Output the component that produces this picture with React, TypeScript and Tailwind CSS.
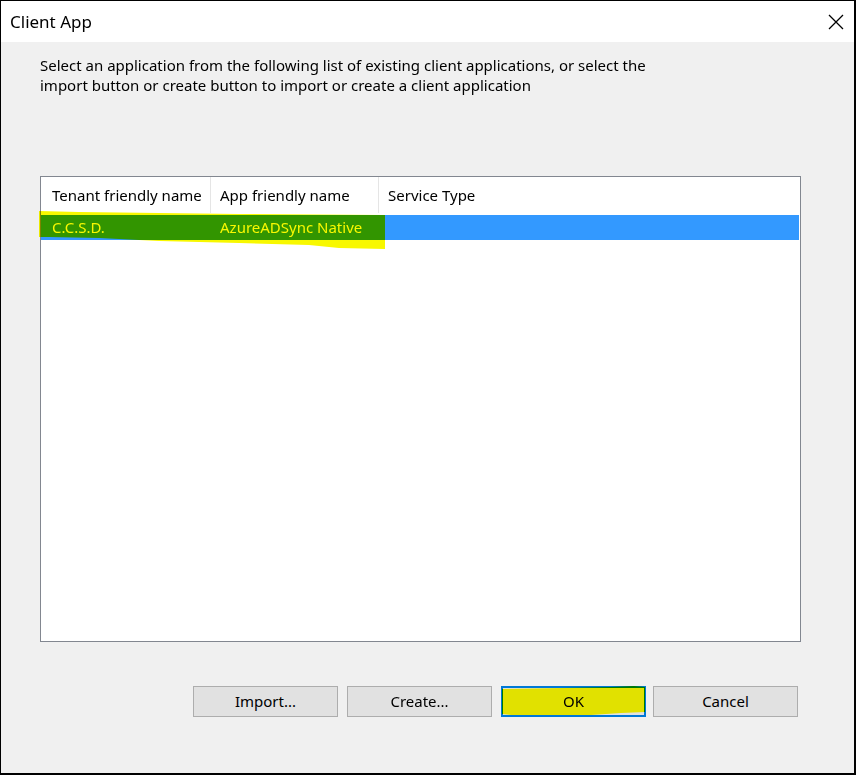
import React from "react";

const font = { fontFamily: '"Noto Sans", "Open Sans", sans-serif' };

function CloseIcon() {
  return (
    <svg width="16" height="16" viewBox="0 0 16 16" className="block">
      <path d="M1 1 L15 15 M15 1 L1 15" stroke="#000" strokeWidth="1.3" fill="none" />
    </svg>
  );
}

function DialogButton({ label, primary }: { label: string; primary?: boolean }) {
  return (
    <div
      className={`relative flex h-[31px] w-[145px] items-center justify-center text-[15px] text-black ${
        primary ? "border-2 border-[#0078d7] bg-[#e1e1e1]" : "border border-[#adadad] bg-[#e1e1e1]"
      }`}
    >
      {label}
      {primary && (
        // marker highlight over the OK button
        <svg
          className="pointer-events-none absolute left-[-2px] top-[-2px] mix-blend-multiply"
          width="145"
          height="31"
          viewBox="0 0 145 31"
        >
          <polygon
            points="1,3 60,2 110,1 133,0 144,1 144,26 120,27 90,29 40,29 10,29 1,28"
            fill="#ffff00"
          />
        </svg>
      )}
    </div>
  );
}

export default function App() {
  return (
    <div
      className="relative h-[775px] w-[856px] overflow-hidden border-l border-t border-r-2 border-b-2 border-black bg-[#f0f0f0]"
      style={font}
    >
      {/* Title bar */}
      <div className="flex h-[41px] items-center justify-between bg-white pl-[9px] pr-[10px]">
        <span className="text-[17px] text-black">Client App</span>
        <CloseIcon />
      </div>

      <div className="pl-[39px] pt-[13px]">
        <p className="text-[15px] leading-[20px] text-black">
          Select an application from the following list of existing client applications, or select the
          <br />
          import button or create button to import or create a client application
        </p>

        {/* List view */}
        <div className="relative mt-[81px] h-[466px] w-[761px] border border-[#828790] bg-white">
          <div className="flex h-[36px] text-[15px] text-black">
            <div className="flex w-[170px] items-center border-r border-[#e5e5e5] pl-[11px]">
              Tenant friendly name
            </div>
            <div className="flex w-[168px] items-center border-r border-[#e5e5e5] pl-[9px]">
              App friendly name
            </div>
            <div className="flex flex-1 items-center pl-[9px]">Service Type</div>
          </div>
          <div className="relative mt-[2px] mr-[1px] flex h-[25px] items-center bg-[#3399ff] text-[15px] text-white">
            <div className="w-[170px] pl-[11px]">C.C.S.D.</div>
            <div className="pl-[9px]">AzureADSync Native</div>
            {/* marker highlight over the selected row */}
            <svg
              className="pointer-events-none absolute left-[-2px] top-[-4px] mix-blend-multiply"
              width="350"
              height="40"
              viewBox="0 0 350 40"
            >
              <polygon
                points="0,0 40,1 120,2 200,3 346,4 346,38 300,37 270,34 200,32 120,30 60,27 10,26 0,26"
                fill="#f8f800"
              />
            </svg>
          </div>
        </div>

        {/* Buttons */}
        <div className="mt-[44px] flex items-center pl-[153px]">
          <DialogButton label="Import..." />
          <div className="ml-[9px]">
            <DialogButton label="Create..." />
          </div>
          <div className="ml-[9px]">
            <DialogButton label="OK" primary />
          </div>
          <div className="ml-[7px]">
            <DialogButton label="Cancel" />
          </div>
        </div>
      </div>
    </div>
  );
}
